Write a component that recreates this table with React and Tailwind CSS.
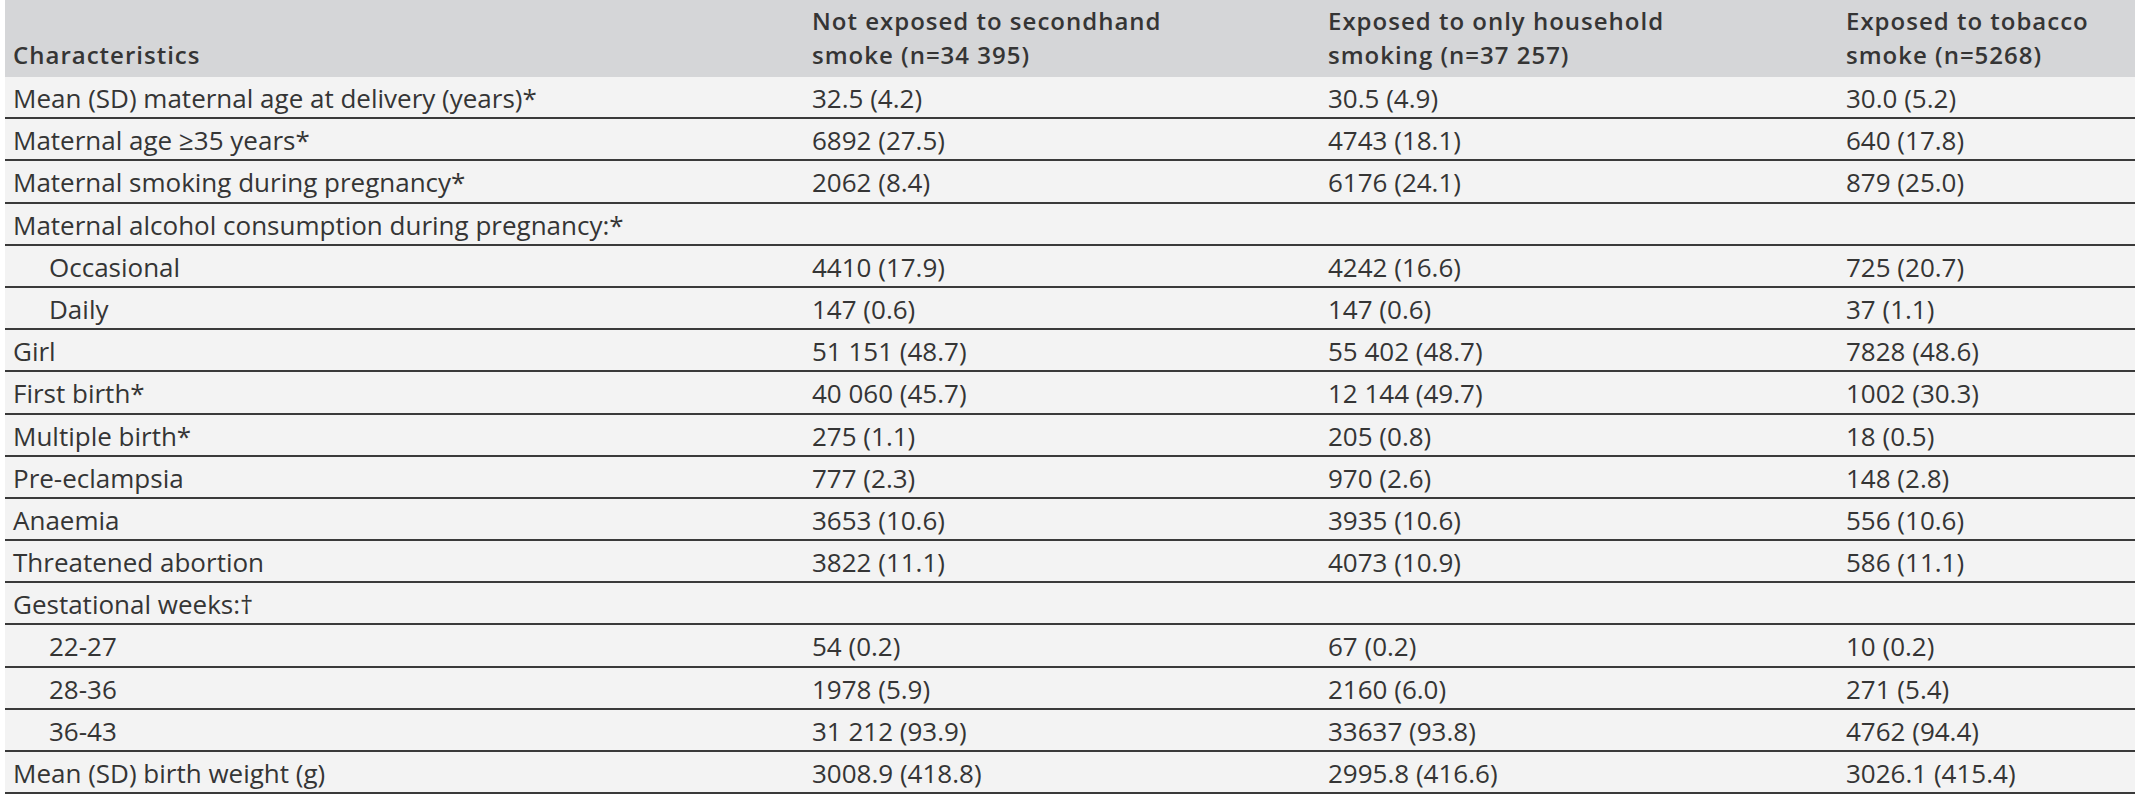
const COLS = 'grid grid-cols-[799px_516px_518px_297px]'

const HEADERS = [
  'Characteristics',
  'Not exposed to secondhand smoke (n=34 395)',
  'Exposed to only household smoking (n=37 257)',
  'Exposed to tobacco smoke (n=5268)',
]

const ROWS = [
  { label: 'Mean (SD) maternal age at delivery (years)*', values: ['32.5 (4.2)', '30.5 (4.9)', '30.0 (5.2)'] },
  { label: 'Maternal age ≥35 years*', values: ['6892 (27.5)', '4743 (18.1)', '640 (17.8)'] },
  { label: 'Maternal smoking during pregnancy*', values: ['2062 (8.4)', '6176 (24.1)', '879 (25.0)'] },
  { label: 'Maternal alcohol consumption during pregnancy:*', values: ['', '', ''] },
  { label: 'Occasional', indent: true, values: ['4410 (17.9)', '4242 (16.6)', '725 (20.7)'] },
  { label: 'Daily', indent: true, values: ['147 (0.6)', '147 (0.6)', '37 (1.1)'] },
  { label: 'Girl', values: ['51 151 (48.7)', '55 402 (48.7)', '7828 (48.6)'] },
  { label: 'First birth*', values: ['40 060 (45.7)', '12 144 (49.7)', '1002 (30.3)'] },
  { label: 'Multiple birth*', values: ['275 (1.1)', '205 (0.8)', '18 (0.5)'] },
  { label: 'Pre-eclampsia', values: ['777 (2.3)', '970 (2.6)', '148 (2.8)'] },
  { label: 'Anaemia', values: ['3653 (10.6)', '3935 (10.6)', '556 (10.6)'] },
  { label: 'Threatened abortion', values: ['3822 (11.1)', '4073 (10.9)', '586 (11.1)'] },
  { label: 'Gestational weeks:†', values: ['', '', ''] },
  { label: '22-27', indent: true, values: ['54 (0.2)', '67 (0.2)', '10 (0.2)'] },
  { label: '28-36', indent: true, values: ['1978 (5.9)', '2160 (6.0)', '271 (5.4)'] },
  { label: '36-43', indent: true, values: ['31 212 (93.9)', '33637 (93.8)', '4762 (94.4)'] },
  { label: 'Mean (SD) birth weight (g)', values: ['3008.9 (418.8)', '2995.8 (416.6)', '3026.1 (415.4)'] },
]

export default function App() {
  return (
    <div className="min-h-screen bg-white pl-[5px] font-['Open_Sans',sans-serif] text-[#353535]">
      <div className="w-[2130px]">
        {/* Header */}
        <div className={`${COLS} h-[77px] bg-[#d5d6d8]`}>
          {HEADERS.map(h => (
            <div key={h} className="flex items-end px-[8px] pb-[5px] text-[24px] leading-[34px] font-semibold tracking-[1px]">
              <span className="max-w-[400px]">{h}</span>
            </div>
          ))}
        </div>

        {/* Body */}
        {ROWS.map(row => (
          <div key={row.label} className={`${COLS} h-[42.2px] overflow-hidden bg-[#f3f3f3] border-b-2 border-[#3a3a3a]`}>
            <div className={`pt-[3px] text-[26px] leading-[37px] whitespace-nowrap ${row.indent ? 'pl-[44px]' : 'pl-[8px]'}`}>
              {row.label}
            </div>
            {row.values.map((v, i) => (
              <div key={i} className="pt-[3px] pl-[8px] text-[26px] leading-[37px] whitespace-nowrap">
                {v}
              </div>
            ))}
          </div>
        ))}
      </div>
    </div>
  )
}
